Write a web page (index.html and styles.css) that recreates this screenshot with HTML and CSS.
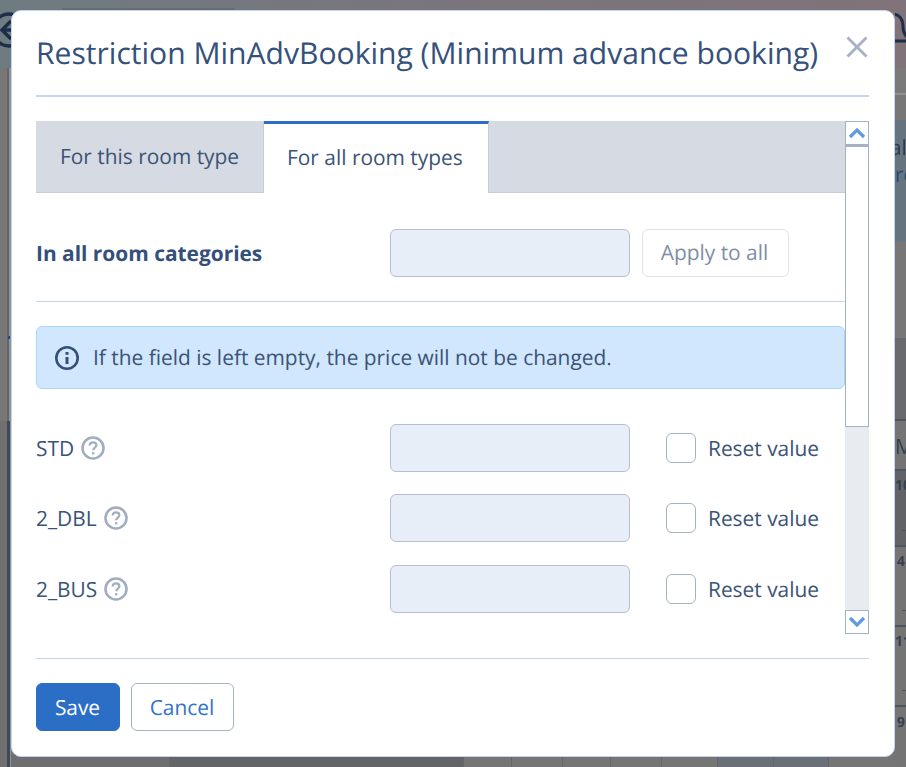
FILE: index.html
```html
<!DOCTYPE html>
<html lang="en">
<head>
<meta charset="utf-8">
<title>Restriction MinAdvBooking</title>
<link rel="stylesheet" href="styles.css">
</head>
<body>
<div class="backdrop">
  <header class="topbar">
    <svg class="back-icon" width="20" height="68" viewBox="0 0 20 68" fill="none" stroke="#1d2e48" stroke-width="3.5">
      <circle cx="9" cy="30" r="16"/>
      <path d="M11 21 L2 30 L11 39 M2 30 H20"/>
    </svg>
    <span class="topbar-tab"></span>
    <svg class="bell-icon" width="11" height="68" viewBox="0 0 11 68" fill="none" stroke="#1d2e48" stroke-width="3">
      <path d="M-3 14 C5 14 8 20 8 27 C8 32 10 35 12 37 M-2 41 H12"/>
    </svg>
  </header>
  <div class="under">
    <div class="side-left">
      <div class="left-upper"><span class="left-blip"></span></div>
      <div class="left-lower"></div>
    </div>
    <div class="center">
      <div class="bottom-cells">
        <span class="cell cell-a"></span><span class="cell cell-b"></span><span class="cell cell-c"></span><span class="cell cell-c2"></span><span class="cell cell-c"></span><span class="cell cell-c2"></span><span class="cell cell-d"></span><span class="cell cell-e"></span><span class="cell cell-e"></span><span class="cell cell-f"></span>
      </div>
    </div>
    <div class="side-right">
      <div class="band band-a"></div>
      <div class="band band-b"></div>
      <div class="band band-panel"><span class="clip-al">al</span><span class="clip-ro">ro</span></div>
      <div class="band band-c"></div>
      <div class="band band-d"></div>
      <div class="band band-m">M</div>
      <div class="band band-row dark"><b>10</b><i></i></div>
      <div class="band band-row"><b class="indent">4</b><i></i></div>
      <div class="band band-row"><b>11</b><i></i></div>
      <div class="band band-last"><b class="indent">9</b></div>
    </div>
  </div>
</div>

<div class="modal">
  <div class="modal-head">
    <h1>Restriction MinAdvBooking (Minimum advance booking)</h1>
    <svg class="close" width="22" height="22" viewBox="0 0 22 22" fill="none" stroke="#a8b4c6" stroke-width="3">
      <path d="M1.5 1.5 L20.5 20.5 M20.5 1.5 L1.5 20.5"/>
    </svg>
  </div>

  <div class="scroll-wrap">
    <div class="scroll-body">
      <div class="tabs">
        <div class="tab">For this room type</div>
        <div class="tab active">For all room types</div>
      </div>

      <div class="all-row">
        <div class="label strong">In all room categories</div>
        <div class="field"></div>
        <div class="apply">Apply to all</div>
      </div>

      <div class="alert">
        <svg width="24" height="24" viewBox="0 0 24 24" fill="none" stroke="#34507a">
          <circle cx="12" cy="12" r="10.7" stroke-width="2.6"/>
          <path d="M12 11 V18" stroke-width="3"/>
          <path d="M12 6 V8.8" stroke-width="3"/>
        </svg>
        <span>If the field is left empty, the price will not be changed.</span>
      </div>

      <div class="rows">
        <div class="room">
          <div class="label">STD
            <svg class="help" width="24" height="24" viewBox="0 0 24 24" fill="none" stroke="#a2adc0">
              <circle cx="12" cy="12" r="10.5" stroke-width="2.6"/>
              <path d="M8.6 9.6 C8.6 7.4 10.2 6.4 12 6.4 C14 6.4 15.4 7.6 15.4 9.3 C15.4 11.6 12.2 11.6 12.2 14.2" stroke-width="2.2"/>
              <path d="M12.2 16.2 V18.4" stroke-width="2.4"/>
            </svg>
          </div>
          <div class="field"></div>
          <div class="check"></div>
          <div class="reset">Reset value</div>
        </div>
        <div class="room">
          <div class="label">2_DBL
            <svg class="help" width="24" height="24" viewBox="0 0 24 24" fill="none" stroke="#a2adc0">
              <circle cx="12" cy="12" r="10.5" stroke-width="2.6"/>
              <path d="M8.6 9.6 C8.6 7.4 10.2 6.4 12 6.4 C14 6.4 15.4 7.6 15.4 9.3 C15.4 11.6 12.2 11.6 12.2 14.2" stroke-width="2.2"/>
              <path d="M12.2 16.2 V18.4" stroke-width="2.4"/>
            </svg>
          </div>
          <div class="field"></div>
          <div class="check"></div>
          <div class="reset">Reset value</div>
        </div>
        <div class="room">
          <div class="label">2_BUS
            <svg class="help" width="24" height="24" viewBox="0 0 24 24" fill="none" stroke="#a2adc0">
              <circle cx="12" cy="12" r="10.5" stroke-width="2.6"/>
              <path d="M8.6 9.6 C8.6 7.4 10.2 6.4 12 6.4 C14 6.4 15.4 7.6 15.4 9.3 C15.4 11.6 12.2 11.6 12.2 14.2" stroke-width="2.2"/>
              <path d="M12.2 16.2 V18.4" stroke-width="2.4"/>
            </svg>
          </div>
          <div class="field"></div>
          <div class="check"></div>
          <div class="reset">Reset value</div>
        </div>
      </div>
    </div>

    <div class="scrollbar">
      <div class="sb-btn">
        <svg width="18" height="12" viewBox="0 0 18 12" fill="none" stroke="#5f9be3" stroke-width="3.2"><path d="M2 10 L9 3 L16 10"/></svg>
      </div>
      <div class="sb-thumb"></div>
      <div class="sb-track"></div>
      <div class="sb-btn">
        <svg width="18" height="12" viewBox="0 0 18 12" fill="none" stroke="#5f9be3" stroke-width="3.2"><path d="M2 2 L9 9 L16 2"/></svg>
      </div>
    </div>
  </div>

  <div class="modal-foot">
    <div class="btn primary">Save</div>
    <div class="btn ghost">Cancel</div>
  </div>
</div>
</body>
</html>
```

FILE: styles.css
```css
* { box-sizing: border-box; }
html, body { margin: 0; height: 100%; overflow: hidden; }
body {
  font-family: "Open Sans", "Noto Sans", sans-serif;
  font-size: 20.9px;
  text-rendering: geometricPrecision;
  color: #3b5376;
  background: #747474;
}

/* dimmed page behind the dialog */
.backdrop {
  display: flex;
  flex-direction: column;
  height: 767px;
  filter: blur(0.5px);
}
.topbar {
  height: 68px;
  flex: none;
  display: flex;
  background: linear-gradient(90deg, #6e7b80 0%, #7a757c 50%, #80737a 100%);
  overflow: hidden;
}
.topbar-tab {
  margin: 8px auto 0 42px;
  width: 173px;
  height: 3px;
  background: #656d74;
}
.under { flex: 1; display: flex; min-height: 0; }
.side-left { width: 11px; flex: none; display: flex; flex-direction: column; }
.left-upper {
  height: 353px;
  background: #777777;
  border-right: 1px solid #8d959b;
  box-shadow: inset -1px 0 0 #8d959b, inset -3px 0 0 #656565;
  display: flex;
  align-items: flex-end;
  padding-bottom: 82px;
}
.left-blip { width: 3px; height: 3px; margin-left: 8px; background: #27497a; }
.left-lower {
  flex: 1;
  background: #707070;
  border-right: 1px solid #8d959b;
  box-shadow: inset -3px 0 0 #3d4956;
}
.center { flex: 1; display: flex; flex-direction: column; justify-content: flex-end; }
.bottom-cells { height: 12px; display: flex; }
.cell { border-right: 1px solid #666; height: 100%; background: #757575; }
.cell-a { width: 159px; background: #6e6e70; }
.cell-b { width: 294px; background: #636467; }
.cell-c { width: 48px; }
.cell-c2 { width: 51px; }
.cell-d { width: 56px; }
.cell-e { width: 55.5px; background: #6b7078; }
.cell-f { flex: 1; border-right: 0; }
.side-right { width: 11px; flex: none; display: flex; flex-direction: column; overflow: hidden; color: #33404f; }
.band { flex: none; white-space: nowrap; }
.band-a { height: 27px; background: #7a7a7a; border-bottom: 2px solid #909090; }
.band-b { height: 25px; background: #777777; }
.band-panel {
  height: 122px;
  background: #66747f;
  display: flex;
  flex-direction: column;
  line-height: 27px;
  padding-top: 15px;
  color: #2b3b4e;
}
.clip-al { margin-left: -5px; }
.clip-ro { margin-left: 0; color: #2a4a72; }
.band-c { height: 96px; background: #777777; }
.band-d { height: 83px; background: #696a6d; border-bottom: 2px solid #4d5560; }
.band-m { height: 50px; background: #747474; line-height: 52px; border-bottom: 2px solid #4d5560; }
.band-row {
  height: 80px;
  background: #747474;
  border-bottom: 2px solid #4d5560;
  display: flex;
  flex-direction: column;
  justify-content: space-between;
  padding: 4px 0 14px;
  font-size: 14px;
}
.band-row.dark { height: 76px; background: #626367; }
.band-row b { line-height: 22px; }
.band-row i { display: block; width: 4px; height: 1px; margin-left: 7px; background: #4d5560; }
.band-last { flex: 1; background: #747474; font-size: 14px; padding-top: 6px; }
.indent { margin-left: 2px; }

/* dialog */
.modal {
  position: fixed;
  left: 11px;
  top: 10px;
  width: 884px;
  height: 747px;
  background: #fff;
  border: 1px solid #c3d5ee;
  border-radius: 10px;
  padding: 0 25px 0 24px;
  display: flex;
  flex-direction: column;
}
.modal-head {
  height: 86px;
  flex: none;
  display: flex;
  justify-content: space-between;
  border-bottom: 2px solid #c3d5ee;
}
.modal-head h1 {
  margin: 0;
  padding-top: 21px;
  font-size: 30.08px;
  line-height: 42px;
  font-weight: 400;
  color: #35517b;
  white-space: nowrap;
}
.close { margin: 25px 1px 0 0; }

.scroll-wrap {
  margin-top: 24px;
  height: 513px;
  flex: none;
  display: flex;
  overflow: hidden;
}
.scroll-body { flex: 1; min-width: 0; overflow: hidden; }
.tabs {
  height: 72px;
  display: flex;
  background: #d6dbe3;
  border-bottom: 1px solid #c5cbd8;
}
.tab {
  width: 228px;
  padding-left: 24px;
  line-height: 73px;
  border-right: 1px solid #c5cbd8;
  white-space: nowrap;
}
.tab.active {
  width: 225px;
  height: 72px;
  padding: 0 0 0 23px;
  background: #fff;
  border-top: 3px solid #2a6ec6;
  line-height: 69px;
}
.all-row {
  margin-top: 36px;
  padding-bottom: 24px;
  border-bottom: 1px solid #c9d6e6;
  display: flex;
  align-items: center;
}
.label {
  width: 354px;
  flex: none;
  display: flex;
  align-items: center;
  gap: 7px;
  padding-top: 2px;
  white-space: nowrap;
}
.help { margin-top: -2px; }
.strong { font-weight: 700; color: #34507a; }
.field {
  width: 240px;
  height: 48px;
  flex: none;
  background: #e7eef8;
  border: 1px solid #b5bfd3;
  border-radius: 6px;
}
.apply {
  margin-left: 12px;
  width: 147px;
  height: 48px;
  line-height: 46px;
  padding-right: 2px;
  text-align: center;
  border: 1px solid #dfe3e9;
  border-radius: 6px;
  color: #7f8ea5;
}
.alert {
  margin-top: 24px;
  height: 63px;
  padding-left: 18px;
  display: flex;
  align-items: center;
  gap: 14px;
  background: #d1e7fd;
  border: 1px solid #a9d6fb;
  border-radius: 6px;
}
.alert svg { flex: none; }
.rows {
  margin-top: 35px;
  display: flex;
  flex-direction: column;
  gap: 22.4px;
}
.room { display: flex; align-items: center; height: 48px; }
.check {
  margin-left: 36px;
  width: 30px;
  height: 30px;
  flex: none;
  border: 1px solid #a5b1c5;
  border-radius: 6px;
}
.reset { margin-left: 12px; padding-top: 2px; white-space: nowrap; }

.scrollbar {
  width: 24px;
  flex: none;
  display: flex;
  flex-direction: column;
  background: #e8ecf0;
}
.sb-btn {
  height: 24px;
  flex: none;
  display: flex;
  align-items: center;
  justify-content: center;
  background: #fff;
  border: 1px solid #a5b1c5;
}
.sb-thumb {
  height: 282px;
  flex: none;
  background: #fff;
  border: 1px solid #a5b1c5;
  border-top-width: 2px;
}
.sb-track { flex: 1; }

.modal-foot {
  margin-top: 24px;
  padding-top: 24px;
  border-top: 1px solid #c3d5ee;
  display: flex;
  gap: 11px;
}
.btn {
  height: 48px;
  line-height: 48px;
  padding-right: 1px;
  text-align: center;
  border-radius: 6px;
  border: 1px solid #a5b1c5;
}
.primary { width: 84px; background: #2a6ec6; border-color: #2a6ec6; color: #fff; }
.ghost { width: 103px; color: #2e73c8; }
```
